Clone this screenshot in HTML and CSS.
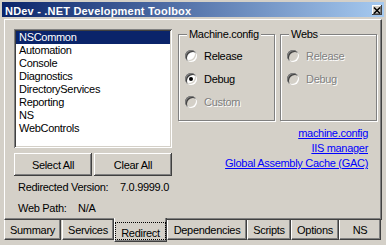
FILE: index.html
```html
<!DOCTYPE html>
<html>
<head>
<meta charset="utf-8">
<title>NDev - .NET Development Toolbox</title>
<link rel="stylesheet" href="styles.css">
</head>
<body>
<div class="window">
  <div class="titlebar">
    <span class="title">NDev - .NET Development Toolbox</span>
    <span class="close"><svg width="8" height="7" viewBox="0 0 8 7"><path d="M1 0.5l6 6M7 0.5l-6 6" stroke="#000" stroke-width="1.5" fill="none"/></svg></span>
  </div>
  <div class="panel">
    <div class="left">
      <ul class="listbox">
        <li class="selected">NSCommon</li>
        <li>Automation</li>
        <li>Console</li>
        <li>Diagnostics</li>
        <li>DirectoryServices</li>
        <li>Reporting</li>
        <li>NS</li>
        <li>WebControls</li>
      </ul>
      <div class="buttons">
        <button class="btn">Select All</button>
        <button class="btn">Clear All</button>
      </div>
      <div class="info version"><span class="label">Redirected Version:</span><span>7.0.9999.0</span></div>
      <div class="info webpath"><span class="label">Web Path:</span><span>N/A</span></div>
    </div>
    <div class="right">
      <div class="groups">
        <div class="group">
          <span class="group-title">Machine.config</span>
          <div class="option first"><span class="radio"></span>Release</div>
          <div class="option"><span class="radio checked"></span>Debug</div>
          <div class="option disabled"><span class="radio"></span>Custom</div>
        </div>
        <div class="group">
          <span class="group-title">Webs</span>
          <div class="option first disabled"><span class="radio"></span>Release</div>
          <div class="option disabled"><span class="radio"></span>Debug</div>
        </div>
      </div>
      <div class="links">
        <a class="link">machine.config</a>
        <a class="link">IIS manager</a>
        <a class="link">Global Assembly Cache (GAC)</a>
      </div>
    </div>
  </div>
  <div class="tabs">
    <div class="tab tab-summary">Summary</div>
    <div class="tab tab-services">Services</div>
    <div class="tab tab-redirect active"><span class="focus">Redirect</span></div>
    <div class="tab tab-dependencies">Dependencies</div>
    <div class="tab tab-scripts">Scripts</div>
    <div class="tab tab-options">Options</div>
    <div class="tab tab-ns">NS</div>
  </div>
</div>
</body>
</html>
```

FILE: styles.css
```css
* { box-sizing: border-box; }
html, body { margin: 0; padding: 0; }
body {
  width: 386px;
  height: 245px;
  overflow: hidden;
  background: #d4d0c8;
  color: #000;
  font-family: "Liberation Sans", Arial, sans-serif;
  font-size: 11px;
  letter-spacing: -0.3px;
}
.window {
  height: 245px;
  padding: 2px 2px 0;
  display: flex;
  flex-direction: column;
}
.titlebar {
  flex: none;
  height: 15px;
  display: flex;
  justify-content: space-between;
  align-items: flex-start;
  padding: 0 2px 0 3px;
  background: linear-gradient(to right, #0a246a, #a6caf0);
}
.title {
  color: #fff;
  font-weight: bold;
  letter-spacing: 0.2px;
  line-height: 11px;
  padding-top: 4px;
  white-space: nowrap;
}
.close {
  width: 10px;
  height: 10px;
  margin-top: 3px;
  display: flex;
  align-items: center;
  justify-content: center;
  background: #d4d0c8;
  box-shadow: inset -1px -1px #404040, inset 1px 1px #fff, inset -2px -2px #808080;
}
.close svg { display: block; }
.panel {
  flex: none;
  margin: 2px 0 0 2px;
  width: 378px;
  height: 201px;
  display: flex;
  gap: 6px;
  padding: 9px 0 0 9px;
  border-top: 1px solid #fff;
  border-left: 1px solid #fff;
  border-right: 1px solid #404040;
  border-bottom: 1px solid #404040;
  box-shadow: inset -1px -1px #808080;
}
.left { flex: none; width: 158px; }
.listbox {
  list-style: none;
  margin: 0;
  padding: 2px;
  height: 119px;
  background: #fff;
  box-shadow: inset 1px 1px #808080, inset -1px -1px #fff, inset 2px 2px #404040, inset -2px -2px #d4d0c8;
}
.listbox li { line-height: 13px; padding-left: 3px; white-space: nowrap; }
.listbox .selected { background: #0a246a; color: #fff; }
.buttons { display: flex; gap: 2px; margin-top: 5px; }
.btn {
  width: 78px;
  height: 23px;
  padding: 0;
  border: 0;
  font: inherit;
  letter-spacing: inherit;
  color: #000;
  background: #d4d0c8;
  box-shadow: inset -1px -1px #404040, inset 1px 1px #fff, inset -2px -2px #808080, inset 2px 2px #d4d0c8;
}
.info { display: flex; padding-left: 4px; line-height: 16px; white-space: nowrap; }
.version { margin-top: 3px; }
.webpath { margin-top: 5px; }
.version .label { width: 102px; }
.webpath .label { width: 60px; }
.right { flex: none; width: 199px; padding-top: 5px; }
.groups { display: flex; gap: 5px; }
.group {
  width: 97px;
  height: 87px;
  border: 1px solid #808080;
  box-shadow: inset 1px 1px #fff, 1px 1px #fff;
  padding: 0 0 0 6px;
  display: flex;
  flex-direction: column;
  align-items: flex-start;
}
.group-title {
  margin: -8px 0 0 2px;
  padding: 0 2px;
  line-height: 14px;
  background: #d4d0c8;
  white-space: nowrap;
}
.option { display: flex; align-items: center; gap: 7px; height: 23px; white-space: nowrap; }
.option.first { margin-top: 3px; }
.radio {
  position: relative;
  flex: none;
  width: 12px;
  height: 12px;
  border-radius: 50%;
  background: #fff;
  box-shadow: inset 1px 1px #808080, inset -1px -1px #fff, inset 2px 2px #404040, inset -2px -2px #d4d0c8;
}
.radio.checked::after {
  content: "";
  position: absolute;
  left: 4px;
  top: 4px;
  width: 4px;
  height: 4px;
  border-radius: 50%;
  background: #000;
}
.disabled { color: #808080; text-shadow: 1px 1px #fff; }
.disabled .radio { background: #d4d0c8; }
.links {
  margin-top: 5px;
  padding-right: 9px;
  display: flex;
  flex-direction: column;
  align-items: flex-end;
  line-height: 15px;
}
.link { color: #0000ff; text-decoration: underline; white-space: nowrap; }
.tabs { display: flex; align-items: flex-start; margin-left: 2px; }
.tab {
  height: 20px;
  padding-top: 1px;
  line-height: 18px;
  text-align: center;
  white-space: nowrap;
  background: #d4d0c8;
  border-left: 1px solid #fff;
  border-right: 1px solid #404040;
  border-bottom: 1px solid #404040;
  box-shadow: inset -1px -1px #808080;
}
.tab-summary { width: 57px; margin-right: 1px; }
.tab-services { width: 52px; }
.tab-redirect { width: 53px; }
.tab-dependencies { width: 80px; }
.tab-scripts { width: 44px; }
.tab-options { width: 48px; }
.tab-ns { width: 42px; }
.tab.active {
  margin-top: -2px;
  height: 24px;
  padding: 4px 0 0;
}
.focus {
  display: block;
  height: 18px;
  border: 1px dotted #000;
  line-height: 12px;
  padding-top: 4px;
}
```
